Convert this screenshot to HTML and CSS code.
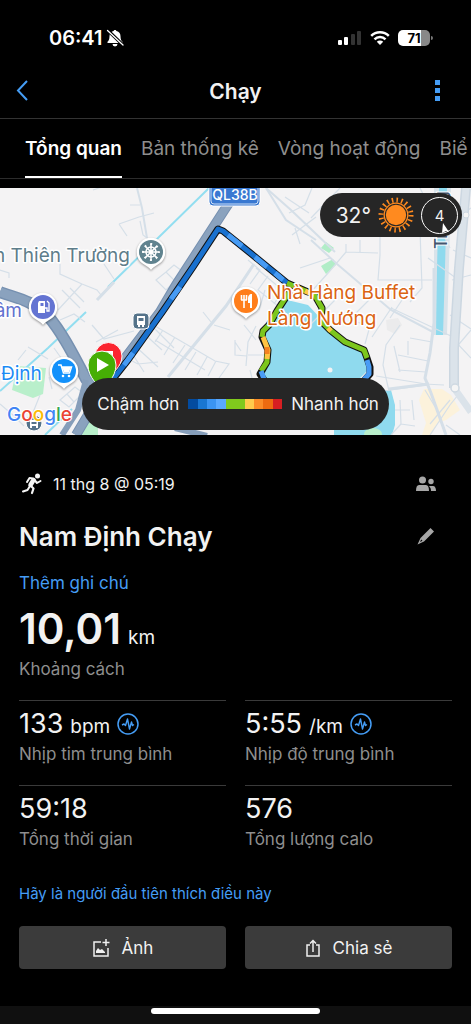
FILE: index.html
```html
<!DOCTYPE html>
<html lang="vi">

<head>
	<meta charset="utf-8">
	<meta name="viewport" content="width=device-width, initial-scale=1">
	<title>Chạy</title>
	<link rel="stylesheet" href="styles.css">
</head>

<body>
	<div class="status">
		<div class="status-left">
			<span class="time">06:41</span>
			<svg width="18" height="18" viewBox="0 0 18 18">
				<path d="M9 1c.8 0 1.300.5 1.400 1.100C13.400 2.800 14.500 4.800 14.500 7.200c0 3.200.8 4.400 2 5.600v1.200H1.500v-1.200c1.200-1.200 2-2.400 2-5.600 0-2.400 1.100-4.400 4.100-5.100C7.700 1.500 8.200 1 9 1z" fill="#fff" />
				<path d="M6.500 15h5a2.500 2.500 0 0 1-5 0z" fill="#fff" />
				<path d="M1.500 1l15.500 15" stroke="#000" stroke-width="3.200" />
				<path d="M1.500 1.500l15.500 14.500" stroke="#fff" stroke-width="1.300" stroke-linecap="round" />
			</svg>
		</div>
		<div class="status-right">
			<svg width="24" height="16" viewBox="0 0 24 16">
				<rect x="0" y="10" width="4" height="5" rx="1" fill="#fff" />
				<rect x="6" y="7" width="4" height="8" rx="1" fill="#fff" />
				<rect x="13" y="4" width="4" height="11" rx="1" fill="#333" />
				<rect x="19" y="1" width="4" height="14" rx="1" fill="#333" />
			</svg>
			<svg width="20" height="16" viewBox="0 0 20 16">
				<g fill="none" stroke="#fff" stroke-width="2.500">
					<path d="M1.200 5.800a12.500 12.500 0 0 1 17.600 0" />
					<path d="M4.500 9.300a7.800 7.800 0 0 1 11 0" />
				</g>
				<path d="M10 15l-3.200-3.300a4.600 4.600 0 0 1 6.400 0z" fill="#fff" />
			</svg>
			<span class="battery">71</span>
		</div>
	</div>

	<header class="header">
		<button class="icon-btn back" aria-label="Quay lại">
			<svg width="14" height="22" viewBox="0 0 14 22"><path d="M12 1L3 10.500l9 9.500" fill="none" stroke="#459df5" stroke-width="2" /></svg>
		</button>
		<h1>Chạy</h1>
		<button class="icon-btn" aria-label="Thêm">
			<svg width="6" height="22" viewBox="0 0 6 22" fill="#459df5"><path d="M0 0h5v5H0zM0 8h5v5H0zM0 16h5v5H0z" /></svg>
		</button>
	</header>

	<nav class="tabs">
		<a href="#" class="active">Tổng quan</a>
		<a href="#">Bản thống kê</a>
		<a href="#">Vòng hoạt động</a>
		<a href="#">Biể</a>
	</nav>

	<div class="map">
		<svg class="map-svg" viewBox="0 188 471 247" preserveAspectRatio="xMidYMid slice">
			<rect x="-500" y="188" width="1500" height="247" fill="#f4f3f4" />
			<!-- parks and built areas -->
			<path d="M17 366l29 2-3 26-10 4-21-8z" fill="#b9efcb" />
			<path d="M82 420l16-2v17H79z" fill="#b9efcb" />
			<path d="M321 248l5-6 8 6-5 5zM321 266l12-7 3 6-10 9z" fill="#b1edc7" />
			<path d="M424 389h18l9 6 9 15-14 10-8 3-7 12h-9l4-12-7-23z" fill="#fcf2db" />
			<path d="M386 320l12-2 4 7-7 9-8-4z" fill="#ebebec" />
			<!-- water -->
			<path d="M283 299l25 6 15 16 21 20 20 10 4 19-14 14h-90l-2-10 5-13-1-13-4-14 6-14z" fill="#8fdaee" />
			<path d="M334 390h57l4 15v20l-3 10h-58z" fill="#8fdaee" />
			<ellipse cx="373" cy="434" rx="9" ry="6" fill="#b9efcb" />
			<circle cx="330" cy="370" r="2.500" fill="#f4f3f4" />
			<path d="M434 188h17l-4 147h-13z" fill="#d9e3ea" />
			<path d="M439 188h8l-2 80-2 67h-7l1-67z" fill="#8fdaee" />
			<path d="M209 188L108 287M86 312L48 348 0 391M72 409L45 435" fill="none" stroke="#92def0" stroke-width="2" />
			<!-- small roads -->
			<g fill="none" stroke="#d5dfe8" stroke-width="1.200">
				<path d="M93 190l15-5M130 205h10M119 224l20-7 15-4M119 224l8 12M140 221l3 14 8 6" />
				<path d="M60 264v10l22 10 15 6 4 5M82 284L58 310M62 290l18 18M70 288l14 14M104 264l10 15M0 270l9 3v5" />
				<path d="M156 280l10-8 9 9-9 9zM166 272l8-7 8 6M60 320l14-6 11 8M28 347l20 12M54 348l10 14M26 350l-8 10" />
				<path d="M92 325l12 14 30-8M96 342l22-12M118 354l20 10 20-2M140 330l22 20M148 322l26 26M134 345l24 22M130 350l14 22" />
				<path d="M60 400l15-13 8 6-14 14zM67 394l7 8M49 377l3 12M0 404l14 12 10 10M40 395l-12 30" />
				<path d="M155 326l60 35 14 3-10 14M155 340l50 30M163 330l-8 12M175 337l-11 18M185 345l-12 18M196 352l-11 18M207 357l-10 18M216 361l-8 15" />
				<path d="M235 340v15l12 1M235 342l6 9M244 325l12 15M256 326l-8 16-2 24M248 355h20M214 325l16 5M203 312l8 10M250 370l2 8M265 290l-6 20" />
				<path d="M248 260l12 10-10 14M256 268l24 20M268 276l-10 14 20 16M274 304l9-14" />
				<path d="M285 197l24 16M289 213l16-8 7-17M292 235l24-18M300 268l30-10M300 244l-5-16" />
				<path d="M340 188l-29 30M346 252l32 1M380 195v60l-2 25h54M346 252l-17 20-18 20M346 252v-8M360 240v12" />
				<path d="M391 308l60 28M335 300l-30 30M372 297l-20 20M392 307l-20 30M350 320l20 6-5 18" />
				<path d="M402 300l-12 18M420 188l30 60M420 230l2 58-12 14M453 220l18-12M453 250l18 8M452 280l19-5M450 315l21 14M428 258l28 20M410 338l22 4M400 325l-14 20-3 20 6 26" />
				<path d="M376 376l50 8M398 355l30 6M398 370l28 2M394 346l6 26M408 355v-14M384 391l42-6M424 384l20 1M454 340l17 18M454 350l17-20" />
				<path d="M412 400l2 20M400 400l1 24 14 2M425 390l12 20M430 435l20-30 8-10M395 410h15M401 424l-10 11M450 400l-20 24M446 425l14 10" />
			</g>
			<g fill="none" stroke="#d5dfe8" stroke-width="3">
				<path d="M311 240l26 24 54 46 42 22M137 188l5 20 5 30M266 188l20 32 30 20" stroke-width="2" />
				<path d="M254 264l-28 42-58 71M97 300l17-18" />
				<path d="M434 268v55l-4 30-5 25 6 15 15 42M389 389l40-5" />
				<path d="M266 188l25 22 44 42" stroke-width="2" />
			</g>
			<path d="M466 188l-7 80-5 80v40" fill="none" stroke="#ccd7e1" stroke-width="10" />
			<path d="M466 188l-7 80-5 80v40l17 24" fill="none" stroke="#dbe3ea" stroke-width="7" />
			<circle cx="455" cy="388" r="4" fill="#f5f5f5" stroke="#cfd9e2" stroke-width="1.500" />
			<circle cx="466" cy="215" r="3" fill="#f5f5f5" stroke="#cfd9e2" />
			<!-- highways -->
			<g fill="none" stroke="#7690b0">
				<path d="M231 200l-6 9-49 76-16 27-50 66-34 57" stroke-width="10" />
				<path d="M0 292c16 6 34 9 48 24 12 14 22 32 38 63l20 30" stroke-width="12" />
				<path d="M0 292c16 6 34 9 48 24 12 14 22 32 38 63l20 30" stroke="#8aa2be" stroke-width="9" />
				<path d="M231 200l-6 9-49 76-16 27-50 66-34 57" stroke="#8aa2be" stroke-width="8" />
				<path d="M86 380l-8 30-16 25M175 428l32 8" stroke="#869eba" stroke-width="6" />
			</g>
			<!-- track -->
			<g fill="none" stroke-linejoin="round">
				<path d="M109 384l19-24 35-49 30-44 25-38 5 2 31 25 33 27 21 9 6 2 8 14-1 13 9 9 15 12 19 8 3 8 3 9v7l-9 10M290 291l-13 20-8 14-6 6-1 6 6 13-1 12-7 12 4 6" stroke="#111" stroke-width="7" />
				<g stroke-width="5">
					<path d="M109 384l19-24 35-49 30-44 25-38 5 2 31 25 33 27" stroke="#1971cf" />
					<path d="M124 365l9-12M171 299l9-12M228 235l14 11M255 257l12 10M275 273l8 7" stroke="#479bf4" />
					<path d="M287 283l21 9 6 2 8 14-1 13 9 9 15 12 19 8 3 8" stroke="#7cc61d" />
					<path d="M294 286l8 4" stroke="#ff8b20" />
					<path d="M305 291l9 4M328 328l3 3" stroke="#ffc84a" />
					<path d="M367 360l2 7v7l-9 10" stroke="#499cf5" />
					<path d="M290 291l-13 20-8 14-6 6-1 6M267 354l0 8-6 9" stroke="#7cc61d" />
					<path d="M263 337l5 13-1 9" stroke="#ffc341" />
					<path d="M267 347v7" stroke="#f58220" />
					<path d="M261 371l3 8" stroke="#499cf5" />
				</g>
			</g>
			<!-- road sign -->
			<rect x="209" y="182" width="51" height="24" rx="4" fill="#3978d1" stroke="#fff" stroke-width="1" />
			<rect x="211" y="182" width="47" height="22" rx="3" fill="none" stroke="#cfe0f7" />
			<text x="235" y="200" class="road-no" text-anchor="middle">QL38B</text>
			<!-- place names -->
			<text x="130" y="262" text-anchor="end" class="place" fill="#5e7d8a">n Thiên Trường</text>
			<text x="22" y="317" text-anchor="end" class="place" fill="#6371cf">âm</text>
			<text x="1" y="380" class="place" fill="#1b8af5">Định</text>
			<text x="267" y="299" class="place" fill="#db6413">Nhà Hàng Buffet</text>
			<text x="267" y="325" class="place" fill="#db6413">Làng Nướng</text>
			<text transform="translate(447 249) rotate(-90)" class="street">Trường</text>
			<!-- bus stops -->
			<rect x="133" y="313" width="16" height="16" rx="4" fill="#55738a" stroke="#fff" />
			<path d="M137 316h8v9h-1v2h-2v-2h-2v2h-2v-2h-1zM138.500 318v3h5v-3z" fill="#fff" fill-rule="evenodd" />
			<circle cx="34" cy="423" r="8" fill="#55738a" stroke="#fff" />
			<path d="M30 420h8v8h-2v-2h-4v2h-2zM31.500 422v2h5v-2z" fill="#fff" fill-rule="evenodd" />
			<!-- pins -->
			<g stroke="#fff" stroke-width="2.500" class="pin">
				<path d="M151 268c-3-4-13-5-13-16a13 13 0 0 1 26 0c0 11-10 12-13 16z" fill="#fff" />
				<path d="M43 323c-3-4-13-5-13-16a13 13 0 0 1 26 0c0 11-10 12-13 16z" fill="#fff" />
				<path d="M64 387c-3-4-13-5-13-16a13 13 0 0 1 26 0c0 11-10 12-13 16z" fill="#fff" />
				<path d="M246 317c-3-4-13-5-13-16a13 13 0 0 1 26 0c0 11-10 12-13 16z" fill="#fff" />
			</g>
			<circle cx="151" cy="252" r="12" fill="#60838f" />
			<g fill="none" stroke="#fff" stroke-width="1.500">
				<circle cx="151" cy="252" r="5" />
				<path d="M151 244v16M143 252h16M145.500 246.500l11 11M156.500 246.500l-11 11" />
			</g>
			<circle cx="151" cy="252" r="8" fill="none" stroke="#fff" stroke-width="2" stroke-dasharray="2 4.280" stroke-dashoffset="1" />
			<circle cx="43" cy="307" r="12" fill="#6474d2" />
			<path d="M39 301h6v12h-7v-10zM40.500 303v3h3v-3z" fill="#fff" fill-rule="evenodd" />
			<path d="M45 308h2v3h2v-8l-2-2" fill="none" stroke="#fff" stroke-width="1.300" />
			<circle cx="64" cy="371" r="12" fill="#1391fb" />
			<path d="M58 365h3l2.500 8h6l2-6H62" fill="none" stroke="#fff" stroke-width="1.500" />
			<path d="M62 367h9l-2 5h-5z" fill="#fff" />
			<circle cx="63" cy="376" r="1.300" fill="#fff" />
			<circle cx="69" cy="376" r="1.300" fill="#fff" />
			<circle cx="246" cy="301" r="12" fill="#ff7e1b" />
			<path d="M241.500 295v5M244 295v5M246.500 295v5M241 300h6M244 300v8" fill="none" stroke="#fff" stroke-width="1.600" />
			<path d="M252 294v14h-2v-5h-2v-4c0-3 1-5 4-5z" fill="#fff" />
			<!-- finish and start markers -->
			<path d="M108 378c-3-5-13-11-13-22a13.500 13.500 0 0 1 27 0c0 11-10 17-14 22z" fill="#fb2530" stroke="#fff" />
			<path d="M103 351h10v9h-3v-5h-7z" fill="#fff" />
			<path d="M102 392c-3-7-14-14-14-27a14 14 0 0 1 28 0c0 13-11 20-14 27z" fill="#46ae05" stroke="#fff" />
			<path d="M97 358v14l12-7z" fill="#fff" />
			<text x="7" y="421" class="google"><tspan fill="#4285f4">G</tspan><tspan fill="#ea4335">o</tspan><tspan fill="#fbbc05">o</tspan><tspan fill="#4285f4">g</tspan><tspan fill="#34a853">l</tspan><tspan fill="#ea4335">e</tspan></text>
		</svg>

		<div class="weather">
			<span>32°</span>
			<svg width="36" height="36" viewBox="-18 -18 36 36">
				<circle r="14.500" fill="none" stroke="#ff8a1f" stroke-width="6" stroke-dasharray="1.500 3.055" />
				<circle r="12.500" fill="#262626" />
				<circle r="11.800" fill="none" stroke="#ff8a1f" stroke-width="1.300" />
				<circle r="10.200" fill="#ff8a1f" />
			</svg>
			<span class="wind">4
				<svg width="8" height="10" viewBox="0 0 8 10"><path d="M1 0l6 9-3-1-4 2z" fill="#fff" /></svg>
			</span>
		</div>

		<div class="legend">
			<span>Chậm hơn</span>
			<div class="scale">
				<i class="c1"></i><i class="c2"></i><i class="c3"></i><i class="c4"></i><i class="c5"></i><i class="c5"></i><i class="c6"></i><i class="c7"></i><i class="c8"></i><i class="c9"></i>
			</div>
			<span>Nhanh hơn</span>
		</div>
	</div>

	<main class="content">
		<div class="row date-row">
			<svg width="20" height="22" viewBox="0 0 20 22">
				<circle cx="15.500" cy="3" r="2.500" fill="#f5f5f5" />
				<g fill="none" stroke="#f5f5f5" stroke-linecap="round" stroke-linejoin="round">
					<path d="M11.500 7L8.500 12" stroke-width="4.500" />
					<path d="M11 5.500L7.500 5 5 9" stroke-width="2" />
					<path d="M12.500 7l2.500 3 3.500-2" stroke-width="2" />
					<path d="M9 13l2.500 2.500-1.500 4.500" stroke-width="2.200" />
					<path d="M8 13l-2.500 4L1 18.500" stroke-width="2" />
				</g>
			</svg>
			<span class="date">11 thg 8 @ 05:19</span>
			<button class="icon-btn" aria-label="Riêng tư">
				<svg width="20" height="16" viewBox="0 0 20 16" fill="#a6a6a6">
					<circle cx="6.500" cy="4" r="3.500" />
					<circle cx="15" cy="5.500" r="2.700" />
					<path d="M0 15c0-4 1-6 3-6h7c2 0 3 2 3 6zM13 10h4c2 0 3 2 3 5h-5c0-2-.5-3.500-2-5z" />
				</svg>
			</button>
		</div>

		<div class="row title-row">
			<h2>Nam Định Chạy</h2>
			<button class="icon-btn" aria-label="Sửa tên">
				<svg width="18" height="18" viewBox="0 0 18 18"><path d="M13.500 1L17 4.500 7 14.500.5 17.500 3.500 11zM4.200 12.500L3 15l2.500-1.200z" fill="#a6a6a6" fill-rule="evenodd" /></svg>
			</button>
		</div>

		<a href="#" class="note">Thêm ghi chú</a>

		<div class="distance">
			<p class="big">10,01 <small>km</small></p>
			<p class="label">Khoảng cách</p>
		</div>

		<div class="stats">
			<div class="stat">
				<p class="num">133 <small>bpm</small>
					<svg width="22" height="22" viewBox="0 0 22 22" fill="none" stroke="#459df5"><circle cx="11" cy="11" r="10" stroke-width="1.500" /><path d="M5 12l2-1 1.500 1.500L10.500 6l2 10 2-7 1 3.500 1.500-1" stroke-width="1.400" stroke-linejoin="round" /></svg>
				</p>
				<p class="label">Nhịp tim trung bình</p>
			</div>
			<div class="stat">
				<p class="num">5:55 <small>/km</small>
					<svg width="22" height="22" viewBox="0 0 22 22" fill="none" stroke="#459df5"><circle cx="11" cy="11" r="10" stroke-width="1.500" /><path d="M5 12l2-1 1.500 1.500L10.500 6l2 10 2-7 1 3.500 1.500-1" stroke-width="1.400" stroke-linejoin="round" /></svg>
				</p>
				<p class="label">Nhịp độ trung bình</p>
			</div>
			<div class="stat">
				<p class="num">59:18</p>
				<p class="label">Tổng thời gian</p>
			</div>
			<div class="stat">
				<p class="num">576</p>
				<p class="label">Tổng lượng calo</p>
			</div>
		</div>

		<a href="#" class="like">Hãy là người đầu tiên thích điều này</a>

		<div class="actions">
			<button>
				<svg width="18" height="18" viewBox="0 0 18 18" fill="none" stroke="#f0f0f0" stroke-width="1.500"><path d="M9 3H2v14h14V9" /><path d="M14 0v7M10.500 3.500h7" /><path d="M4 14v-2l2-3 2 2 2-1 3 3v1z" fill="#f0f0f0" stroke="none" /></svg>
				Ảnh
			</button>
			<button>
				<svg width="16" height="18" viewBox="0 0 16 18" fill="none" stroke="#f0f0f0" stroke-width="1.500"><path d="M5 6H2v11h12V6h-3M8 13V2M5 4.500l3-3 3 3" /></svg>
				Chia sẻ
			</button>
		</div>
	</main>

	<footer class="home"><span></span></footer>
</body>

</html>
```

FILE: styles.css
```css
* {
	margin: 0;
	padding: 0;
	box-sizing: border-box;
}

body {
	display: flex;
	flex-direction: column;
	min-height: 100vh;
	background: #000;
	color: #f2f2f2;
	font-family: Inter, "Noto Sans", sans-serif;
	font-size: 16px;
	overflow-x: hidden;
}

svg {
	display: block;
	flex: none;
}

a {
	color: #459df5;
	text-decoration: none;
}

button {
	border: 0;
	background: none;
	color: inherit;
	font: inherit;
}

.icon-btn {
	display: flex;
	align-items: center;
	justify-content: center;
	width: 44px;
	height: 44px;
}

/* status bar */
.status {
	display: flex;
	justify-content: space-between;
	height: 64px;
	padding: 12px 41px 0 49px;
}

.status-left,
.status-right {
	display: flex;
	align-items: center;
}

.status-left {
	gap: 3px;
}

.status-right {
	gap: 8px;
}

.time {
	color: #fff;
	font-size: 20px;
	font-weight: 600;
}

.battery {
	position: relative;
	width: 32px;
	border-radius: 5px;
	background: linear-gradient(90deg, #fff 71%, #888 71%);
	color: #000;
	font-size: 13px;
	font-weight: 700;
	line-height: 16px;
	text-align: center;
}

.battery::after {
	content: "";
	position: absolute;
	left: 33px;
	top: 6px;
	width: 2px;
	height: 4px;
	border-radius: 0 2px 2px 0;
	background: #777;
}

/* header */
.header {
	display: flex;
	align-items: center;
	justify-content: space-between;
	height: 55px;
	border-bottom: 1px solid #333;
}

.header h1 {
	font-size: 21px;
	font-weight: 600;
}

.header .icon-btn {
	width: 66px;
}

.header .back {
	padding-right: 22px;
}

.tabs {
	display: flex;
	gap: 19px;
	height: 60px;
	padding-left: 25px;
	border-bottom: 1px solid #2c2c2c;
	overflow: hidden;
	white-space: nowrap;
}

.tabs a {
	color: #8e8e8e;
	font-size: 19px;
	line-height: 59px;
}

.tabs .active {
	border-bottom: 2px solid #fff;
	color: #fff;
	font-weight: 600;
}

/* map */
.map {
	position: relative;
	margin-top: 9px;
	color: #f2f2f2;
}

.map-svg {
	width: 100%;
	height: 247px;
}

.place {
	font-size: 19px;
	stroke: #fff;
	stroke-width: 3px;
	stroke-linejoin: round;
	paint-order: stroke;
}

.street {
	font-size: 17px;
	font-weight: 500;
	fill: #43566e;
	stroke: #fff;
	stroke-width: 2px;
	paint-order: stroke;
}

.road-no {
	fill: #fff;
	font-size: 14px;
	font-weight: 500;
}

.google {
	font-size: 19px;
	font-weight: 500;
	stroke: #fff;
	stroke-width: 2px;
	paint-order: stroke;
}

.pin {
	filter: drop-shadow(0 1px 1px rgba(0, 0, 0, 0.4));
}

.weather {
	position: absolute;
	top: 5px;
	right: 9px;
	display: flex;
	align-items: center;
	gap: 7px;
	height: 44px;
	padding: 0 4px 0 16px;
	border-radius: 22px;
	background: #262626;
	font-size: 21px;
}

.wind {
	position: relative;
	width: 37px;
	border: 1px solid #fff;
	border-radius: 50%;
	font-size: 15px;
	line-height: 35px;
	text-align: center;
}

.wind svg {
	position: absolute;
	right: 7px;
	bottom: 0;
}

.legend {
	position: absolute;
	right: 0;
	bottom: 5px;
	left: 0;
	display: flex;
	align-items: center;
	gap: 9px;
	width: fit-content;
	height: 52px;
	margin: 0 auto;
	padding: 0 10px 0 15px;
	border-radius: 26px;
	background: #262626;
	font-size: 17px;
	white-space: nowrap;
}

.scale {
	display: flex;
	width: 94px;
	height: 10px;
}

.scale i {
	flex: 1;
}

.c1 { background: #034b9f; }
.c2 { background: #1976d2; }
.c3 { background: #3b94f2; }
.c4 { background: #5aa9ff; }
.c5 { background: #80c91d; }
.c6 { background: #ffcb4c; }
.c7 { background: #fc8d27; }
.c8 { background: #ee6b10; }
.c9 { background: #d61f22; }

/* activity */
.content {
	flex: 1;
	padding: 27px 19px 0;
}

.row {
	display: flex;
	align-items: center;
}

.row .icon-btn {
	margin-left: auto;
	margin-right: 4px;
}

.date-row {
	padding-left: 3px;
}

.date {
	margin-left: 11px;
}

.title-row {
	height: 60px;
}

.title-row h2 {
	font-size: 26px;
	font-weight: 600;
}

.note {
	display: block;
	margin-top: 5px;
	font-size: 17px;
	line-height: 24px;
}

.big {
	display: flex;
	align-items: baseline;
	gap: 7px;
	margin: 8px 0 2px;
	font-size: 42px;
	font-weight: 600;
	line-height: 52px;
}

small {
	font-size: 19px;
	font-weight: 400;
	line-height: 20px;
}

.label {
	color: #8e8e8e;
	font-size: 17px;
	line-height: 24px;
}

.stats {
	display: grid;
	grid-template-columns: 1fr 1fr;
	column-gap: 19px;
	margin-top: 19px;
}

.stat {
	height: 85px;
	padding-top: 5px;
	border-top: 1px solid #3a3a3a;
}

.num {
	display: flex;
	align-items: baseline;
	gap: 7px;
	font-size: 27px;
	line-height: 36px;
}

.num svg {
	align-self: center;
}

.like {
	display: block;
	margin-top: 12px;
	font-size: 15px;
	line-height: 24px;
}

.actions {
	display: grid;
	grid-template-columns: 1fr 1fr;
	gap: 19px;
	margin-top: 20px;
}

.actions button {
	display: flex;
	align-items: center;
	justify-content: center;
	gap: 12px;
	height: 43px;
	border-radius: 4px;
	background: #3b3b3b;
	font-size: 17px;
}

.home {
	height: 18px;
	padding-top: 2px;
	background: #101010;
}

.home span {
	display: block;
	width: 36%;
	height: 6px;
	margin: 0 auto;
	border-radius: 3px;
	background: #fff;
}
```
